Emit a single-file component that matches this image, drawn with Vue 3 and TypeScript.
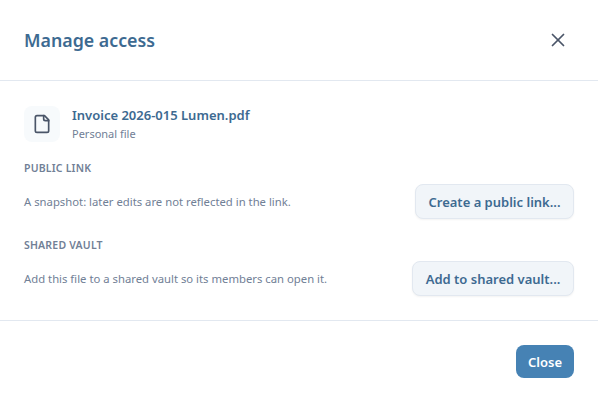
<script setup lang="ts">
const sections = [
  { label: 'PUBLIC LINK', text: 'A snapshot: later edits are not reflected in the link.', action: 'Create a public link...' },
  { label: 'SHARED VAULT', text: 'Add this file to a shared vault so its members can open it.', action: 'Add to shared vault...' },
]
</script>

<template>
  <div class="dialog">
    <header class="head">
      <h1>Manage access</h1>
      <button class="x" aria-label="Close">
        <svg width="24" height="24" viewBox="0 0 24 24" fill="none" stroke="#4a5568" stroke-width="1.75" stroke-linecap="round" stroke-linejoin="round"><path d="M17.500 6.500 6.500 17.500"/><path d="m6.500 6.500 11 11"/></svg>
      </button>
    </header>
    <div class="body">
      <div class="file">
        <div class="ico">
          <svg width="20" height="20" viewBox="0 0 24 24" fill="none" stroke="#4a5568" stroke-width="2" stroke-linecap="round" stroke-linejoin="round"><path d="M15 2H6a2 2 0 0 0-2 2v16a2 2 0 0 0 2 2h12a2 2 0 0 0 2-2V7Z"/><path d="M14 2v4a2 2 0 0 0 2 2h4"/></svg>
        </div>
        <div>
          <div class="name">Invoice 2026-015 Lumen.pdf</div>
          <div class="sub">Personal file</div>
        </div>
      </div>
      <section v-for="s in sections" :key="s.label" class="sec">
        <div class="label">{{ s.label }}</div>
        <div class="row">
          <span class="txt">{{ s.text }}</span>
          <button class="btn">{{ s.action }}</button>
        </div>
      </section>
    </div>
    <footer class="foot"><button class="close">Close</button></footer>
  </div>
</template>

<style scoped>
.dialog { width: 598px; height: 402px; background: #fff; font-family: "Noto Sans", sans-serif; display: flex; flex-direction: column; box-sizing: border-box; }
.head { height: 81px; box-sizing: border-box; border-bottom: 1px solid #e2e8f0; padding: 0 28px 0 24px; display: flex; align-items: center; justify-content: space-between; }
h1 { margin: 0; font-size: 17.8px; font-weight: 600; color: #3d6a91; }
.x { border: 0; background: none; padding: 0; display: flex; }
.body { height: 240px; box-sizing: border-box; border-bottom: 1px solid #e2e8f0; padding: 25px 24px 0; }
.file { display: flex; align-items: center; gap: 12px; }
.ico { width: 36px; height: 36px; border-radius: 8px; background: #f7fafc; display: flex; align-items: center; justify-content: center; }
.name { font-size: 13px; font-weight: 600; color: #3d6a91; line-height: 19px; }
.sub { font-size: 11px; color: #718096; line-height: 17px; }
.sec { margin-top: 18px; }
.label { font-size: 10.5px; font-weight: 600; color: #718096; line-height: 16px; letter-spacing: .2px; }
.row { display: flex; align-items: center; justify-content: space-between; margin-top: 8px; }
.txt { font-size: 11.3px; color: #718096; }
.btn { height: 35px; width: 159px; padding: 0; border: 1px solid #e2e8f0; border-radius: 8px; background: #f1f5f9; color: #3d6a91; font: 600 13px "Noto Sans", sans-serif; box-shadow: 0 1px 2px rgba(0,0,0,.05); }
.sec:last-child .btn { width: 162px; }
.foot { flex: 1; display: flex; justify-content: flex-end; align-items: flex-start; padding: 24px 24px 0; }
.close { width: 58px; height: 33px; border: 0; border-radius: 8px; background: #4682b4; color: #fff; font: 600 13px "Noto Sans", sans-serif; padding: 0; }
</style>
